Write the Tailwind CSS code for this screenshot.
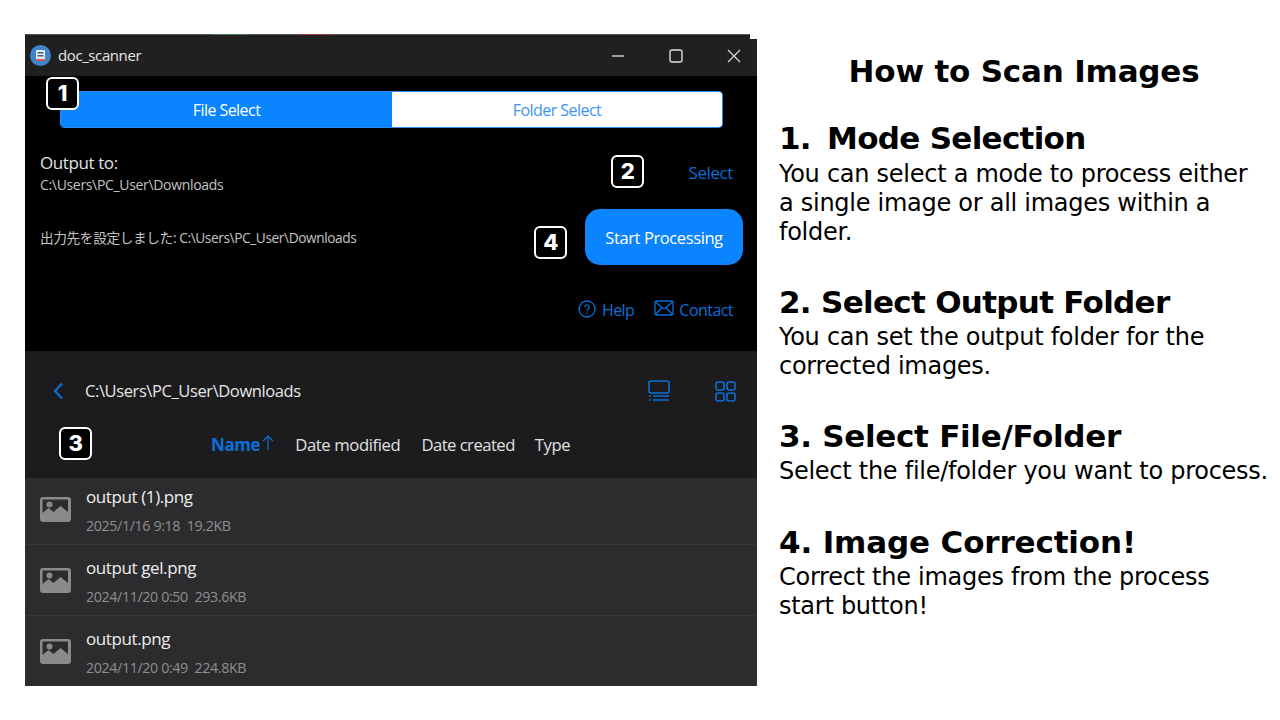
<!DOCTYPE html>
<html lang="en">
<head>
    <meta charset="UTF-8" />
    <title>How to Scan Images</title>
    <script src="https://cdn.jsdelivr.net/npm/@tailwindcss/browser@4"></script>
</head>
<body class="bg-white h-[720px] w-[1280px] overflow-hidden flex font-['Open_Sans','Noto_Sans_CJK_JP',sans-serif]">

<!-- App window -->
<div class="relative ml-[25px] mt-[35px] w-[732px] h-[651px] flex flex-col shrink-0 tracking-[-0.4px]">

    <!-- Title bar -->
    <div class="h-[41px] bg-[#202020] flex items-center pl-[5px] shrink-0">
        <svg class="w-[21px] h-[21px]" viewBox="0 0 21 21">
            <circle cx="10.5" cy="10.5" r="10.5" fill="#3f83cc"/>
            <rect x="6" y="5" width="9" height="10" rx="1" fill="#e8edf3"/>
            <rect x="7.5" y="7" width="6" height="1.5" fill="#3a5f90"/>
            <rect x="7.5" y="10" width="6" height="1.5" fill="#3a5f90"/>
            <rect x="6" y="14" width="9" height="2" fill="#d9534f"/>
        </svg>
        <span class="ml-[7px] text-[15px] tracking-[-0.4px] text-[#e6e6e6]">doc_scanner</span>
        <div class="ml-auto flex items-center">
            <svg class="w-[14px] h-[14px] text-[#d8d8d8] mr-[44px]" viewBox="0 0 14 14" fill="none" stroke="currentColor" stroke-width="1.4"><path d="M1 7h12"/></svg>
            <svg class="w-[14px] h-[14px] text-[#e0e0e0] mr-[44px]" viewBox="0 0 14 14" fill="none" stroke="currentColor" stroke-width="1.4"><rect x="1" y="1" width="12" height="12" rx="2"/></svg>
            <svg class="w-[14px] h-[14px] text-[#d8d8d8] mr-[16px]" viewBox="0 0 14 14" fill="none" stroke="currentColor" stroke-width="1.3"><path d="M1 1l12 12M13 1L1 13"/></svg>
        </div>
    </div>

    <!-- Black panel -->
    <div class="h-[275px] bg-black shrink-0 flex flex-col">
        <div class="ml-[35px] mt-[15px] w-[663px] h-[37px] flex rounded-[4px] overflow-hidden border border-[#2a8cf0] text-[16px] tracking-[-0.55px]">
            <div class="w-[331px] bg-[#0a84ff] text-white flex items-center justify-center pt-[1px]">File Select</div>
            <div class="flex-1 bg-white text-[#3b94f5] flex items-center justify-center pt-[1px]">Folder Select</div>
        </div>
        <div class="flex items-center mt-[24px] pl-[15px] pr-[24px]">
            <div class="pt-[1px]">
                <div class="text-[17px] leading-[20px] text-[#e4e4e4]">Output to:</div>
                <div class="text-[14px] leading-[20px] tracking-[-0.33px] text-[#c4c4c4] mt-[2px]">C:\Users\PC_User\Downloads</div>
            </div>
            <span class="ml-auto mb-[2px] text-[17px] text-[#0a6fd8]">Select</span>
        </div>
        <div class="flex items-center mt-[14px] pl-[15px] pr-[14px]">
            <span class="mt-[2px] text-[13.7px] text-[#c4c4c4]">出力先を設定しました: C:\Users\PC_User\Downloads</span>
            <div class="ml-auto w-[158px] h-[56px] rounded-[15px] bg-[#0a84ff] text-white text-[16.5px] flex items-center justify-center pt-[2px]">Start Processing</div>
        </div>
        <div class="flex items-center justify-end mt-[33px] pr-[24px] text-[16px] tracking-[-0.55px] text-[#0a6fd8]">
            <svg class="w-[18px] h-[18px] mr-[6px] -mt-[3px]" viewBox="0 0 18 18" fill="none" stroke="currentColor" stroke-width="1.3">
                <circle cx="9" cy="9" r="8"/>
                <path d="M6.8 7.2a2.2 2.2 0 1 1 3.4 1.8c-.8.5-1.2.9-1.2 1.7"/>
                <path d="M9 12.6v1"/>
            </svg>
            <span>Help</span>
            <svg class="w-[20px] h-[16px] ml-[20px] mr-[5px] -mt-[4px]" viewBox="0 0 20 16" fill="none" stroke="currentColor" stroke-width="1.3">
                <rect x="1" y="1" width="18" height="14" rx="1.5"/>
                <path d="M1.5 2l8.5 7 8.5-7M1.5 14.5l6-6.5M18.5 14.5l-6-6.5"/>
            </svg>
            <span>Contact</span>
        </div>
    </div>

    <!-- File browser header -->
    <div class="h-[127px] bg-[#1c1c1e] shrink-0 flex flex-col">
        <div class="flex items-center h-[80px] pl-[27px] pr-[21px]">
            <svg class="w-[12px] h-[18px] text-[#0a6fd8]" viewBox="0 0 12 18" fill="none" stroke="currentColor" stroke-width="2.2"><path d="M10 1.5L3 9l7 7.5"/></svg>
            <span class="ml-[21px] text-[16.5px] text-[#e6e6e6]">C:\Users\PC_User\Downloads</span>
            <svg class="ml-auto w-[22px] h-[22px] text-[#0a6fd8]" viewBox="0 0 22 22" fill="none" stroke="currentColor" stroke-width="1.6">
                <rect x="1" y="1" width="20" height="12" rx="2"/>
                <path d="M1 16h2M5 16h16M1 20h2M5 20h16"/>
            </svg>
            <svg class="ml-[45px] w-[21px] h-[21px] text-[#0a6fd8]" viewBox="0 0 21 21" fill="none" stroke="currentColor" stroke-width="1.6">
                <rect x="1" y="1" width="8" height="8" rx="2"/>
                <rect x="12" y="1" width="8" height="8" rx="2"/>
                <rect x="1" y="12" width="8" height="8" rx="2"/>
                <rect x="12" y="12" width="8" height="8" rx="2"/>
            </svg>
        </div>
        <div class="flex items-center pl-[186px] text-[16.7px] text-[#e0e0e0] h-[28px]">
            <span class="font-bold text-[17px] text-[#0a6fd8]">Name</span>
            <svg class="w-[12px] h-[16px] ml-[2px] -mt-[5px] text-[#0a6fd8]" viewBox="0 0 12 16" fill="none" stroke="currentColor" stroke-width="1.2"><path d="M6 15V1M1 6l5-5 5 5"/></svg>
            <span class="ml-[21px]">Date modified</span>
            <span class="ml-[21px] tracking-[-0.55px]">Date created</span>
            <span class="ml-[20px]">Type</span>
        </div>
    </div>

    <!-- File rows -->
    <div class="flex-1 bg-[#2c2c2e] flex flex-col overflow-hidden">
        <div class="h-[67px] flex items-center pl-[15px] border-b border-[#37373a] shrink-0">
            <svg class="w-[31px] h-[25px] -mt-[3px] text-[#8a8a8a]" viewBox="0 0 31 25"><path fill="currentColor" fill-rule="evenodd" d="M3 0h25a3 3 0 0 1 3 3v19a3 3 0 0 1-3 3H3a3 3 0 0 1-3-3V3a3 3 0 0 1 3-3zm0 2.5a.5.5 0 0 0-.5.5v13l6-5 5 4 7-6 7.5 6V3a.5.5 0 0 0-.5-.5z"/><circle cx="9.5" cy="7.5" r="3" fill="currentColor"/></svg>
            <div class="ml-[15px]">
                <div class="text-[17px] leading-[22px] text-[#eeeeee]">output (1).png</div>
                <div class="text-[14.3px] leading-[20px] mt-[8px] text-[#8e8e8e]">2025/1/16 9:18&nbsp; 19.2KB</div>
            </div>
        </div>
        <div class="h-[71px] flex items-center pl-[15px] border-b border-[#37373a] shrink-0">
            <svg class="w-[31px] h-[25px] text-[#8a8a8a]" viewBox="0 0 31 25"><path fill="currentColor" fill-rule="evenodd" d="M3 0h25a3 3 0 0 1 3 3v19a3 3 0 0 1-3 3H3a3 3 0 0 1-3-3V3a3 3 0 0 1 3-3zm0 2.5a.5.5 0 0 0-.5.5v13l6-5 5 4 7-6 7.5 6V3a.5.5 0 0 0-.5-.5z"/><circle cx="9.5" cy="7.5" r="3" fill="currentColor"/></svg>
            <div class="ml-[15px] mt-[4px]">
                <div class="text-[17px] leading-[22px] text-[#eeeeee]">output gel.png</div>
                <div class="text-[14.3px] leading-[20px] mt-[8px] text-[#8e8e8e]">2024/11/20 0:50&nbsp; 293.6KB</div>
            </div>
        </div>
        <div class="h-[71px] flex items-center pl-[15px] shrink-0">
            <svg class="w-[31px] h-[25px] text-[#8a8a8a]" viewBox="0 0 31 25"><path fill="currentColor" fill-rule="evenodd" d="M3 0h25a3 3 0 0 1 3 3v19a3 3 0 0 1-3 3H3a3 3 0 0 1-3-3V3a3 3 0 0 1 3-3zm0 2.5a.5.5 0 0 0-.5.5v13l6-5 5 4 7-6 7.5 6V3a.5.5 0 0 0-.5-.5z"/><circle cx="9.5" cy="7.5" r="3" fill="currentColor"/></svg>
            <div class="ml-[15px] mt-[2px]">
                <div class="text-[17px] leading-[22px] text-[#eeeeee]">output.png</div>
                <div class="text-[14.3px] leading-[20px] mt-[8px] text-[#8e8e8e]">2024/11/20 0:49&nbsp; 224.8KB</div>
            </div>
        </div>
    </div>

    <!-- Top edge of the window, with the smudges of what lies behind it -->
    <div class="absolute left-0 top-[-1px] w-[725px] h-[1px] bg-[#555555]"></div>
    <div class="absolute left-[187px] top-[-1px] w-[36px] h-[1px] bg-[#4a7a50]"></div>
    <div class="absolute left-[273px] top-[-1px] w-[35px] h-[1px] bg-[#a04040]"></div>

    <!-- White notch at top right of the window -->
    <div class="absolute right-0 top-0 w-[7px] h-[4px] bg-white"></div>

    <!-- Numbered callouts -->
    <div class="absolute left-[21px] top-[42px] w-[33px] h-[33px] rounded-[6px] border-2 border-white bg-black text-white font-extrabold text-[22px] flex items-center justify-center font-['Inter',sans-serif]">1</div>
    <div class="absolute left-[586px] top-[120px] w-[33px] h-[33px] rounded-[6px] border-2 border-white bg-black text-white font-extrabold text-[22px] flex items-center justify-center font-['Inter',sans-serif]">2</div>
    <div class="absolute left-[34px] top-[392px] w-[33px] h-[33px] rounded-[6px] border-2 border-white bg-black text-white font-extrabold text-[22px] flex items-center justify-center font-['Inter',sans-serif]">3</div>
    <div class="absolute left-[509px] top-[191px] w-[33px] h-[33px] rounded-[6px] border-2 border-white bg-black text-white font-extrabold text-[22px] flex items-center justify-center font-['Inter',sans-serif]">4</div>
</div>

<!-- Instructions -->
<div class="ml-[22px] flex-1 text-black font-['DejaVu_Sans',sans-serif] whitespace-nowrap">
    <h1 class="mt-[51px] w-[490px] text-center font-bold text-[31px] leading-[40px] tracking-[-0.2px]">How to Scan Images</h1>
    <h2 class="mt-[27px] font-bold text-[31px] leading-[40px] tracking-[-0.7px]">1.<span class="ml-[6px]"> Mode Selection</span></h2>
    <p class="mt-[2px] text-[24px] leading-[29px] tracking-[-0.27px]">You can select a mode to process either<br>a single image or all images within a<br>folder.</p>
    <h2 class="mt-[35px] font-bold text-[31px] leading-[40px] tracking-[-0.7px]">2. Select Output Folder</h2>
    <p class="mt-[1px] text-[24px] leading-[29px] tracking-[-0.27px]">You can set the output folder for the<br>corrected images.</p>
    <h2 class="mt-[35px] font-bold text-[31px] leading-[40px] tracking-[-0.3px]">3. Select File/Folder</h2>
    <p class="mt-[1px] text-[24px] leading-[29px] tracking-[-0.27px]">Select the file/folder you want to process.</p>
    <h2 class="mt-[36px] font-bold text-[31px] leading-[40px] tracking-[-0.15px]">4. Image Correction!</h2>
    <p class="mt-[1px] text-[24px] leading-[29px] tracking-[-0.27px]">Correct the images from the process<br>start button!</p>
</div>

</body>
</html>
